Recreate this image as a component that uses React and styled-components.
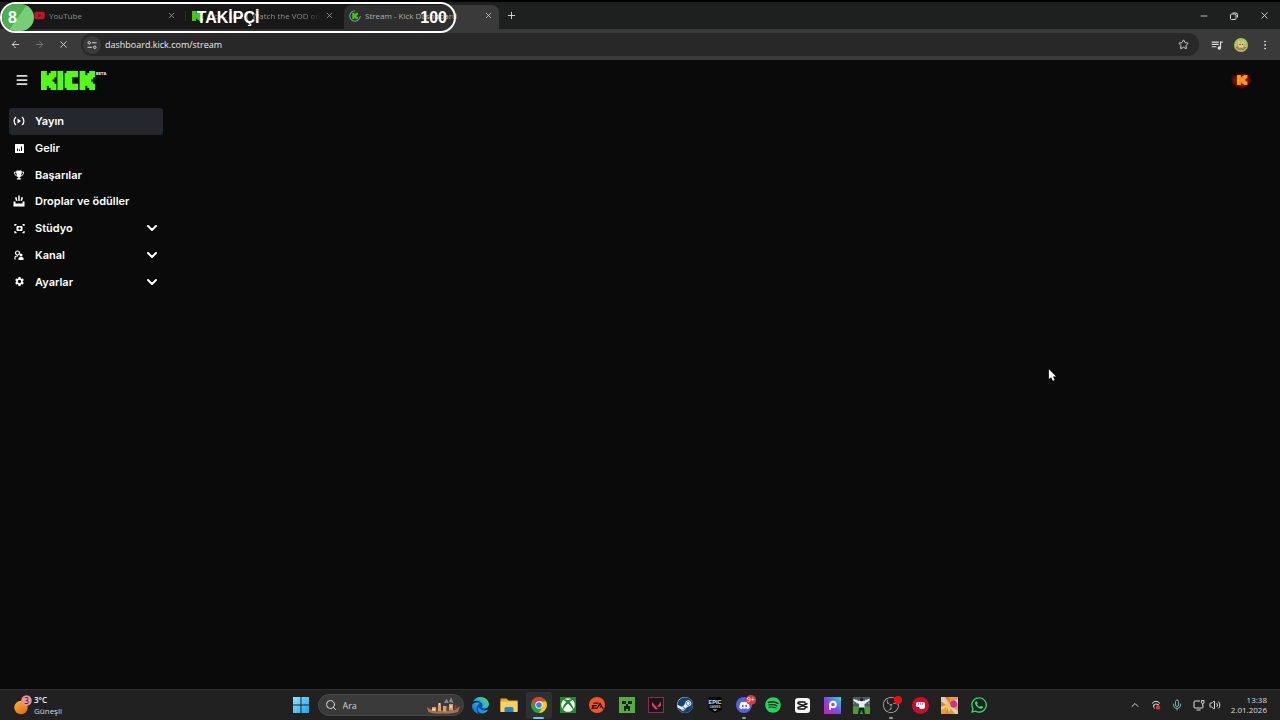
import React from 'react'
import styled, { createGlobalStyle, css } from 'styled-components'
import { ArrowLeft, ArrowRight, X, Plus, Star, Minus, EllipsisVertical, Search, ChevronDown, ChevronUp, Mic, Volume2, Menu } from 'lucide-react'
import { FaXbox, FaDiscord, FaSpotify, FaSteam, FaWhatsapp, FaEdge, FaYoutube, FaTrophy } from 'react-icons/fa6'
import { MdSettings, MdQueueMusic } from 'react-icons/md'
import { SiEa, SiValorant, SiObsstudio } from 'react-icons/si'

const KShape = ({ x = 0 }) => (
  <g transform={`translate(${x} 0)`}>
    <rect width="3" height="9" />
    <rect x="2.5" y="2" width="2" height="5" />
    <rect x="4" y="1" width="1.5" height="7" />
    <rect x="5" width="2" height="4" />
    <rect x="5" y="5" width="2" height="4" />
    <rect x="5" y="3" width="1" height="3" />
    <rect x="6" width="2" height="3" />
    <rect x="6" y="6" width="2" height="3" />
  </g>
)

const KickLogo = () => (
  <svg width="54" height="19" viewBox="0 0 28 9" preserveAspectRatio="none" fill="#53fc18" role="img" aria-label="Kick">
    <KShape />
    <rect x="8.5" width="3" height="9" />
    <rect x="12.2" y="1" width="2" height="7" />
    <rect x="13.2" width="3" height="9" />
    <rect x="15" width="4.2" height="3" />
    <rect x="15" y="6" width="4.2" height="3" />
    <KShape x={20} />
  </svg>
)

const KickMark = () => (
  <svg width="11" height="10" viewBox="0 0 8 9" preserveAspectRatio="none" fill="#53fc18">
    <KShape />
  </svg>
)

const LoadingMark = () => (
  <svg width="12" height="12" viewBox="0 0 22 22">
    <circle cx="11" cy="11" r="9.5" fill="none" stroke="#8cc4ae" strokeWidth="2" strokeDasharray="44 16" />
    <g fill="#53fc18" transform="translate(6 5) scale(1.3)">
      <KShape />
    </g>
  </svg>
)

const StreamIcon = () => (
  <svg width="12" height="10" viewBox="0 0 24 20" fill="none" stroke="#fff" strokeWidth="2.6">
    <path d="M6 2C1 6 1 14 6 18M18 2c5 4 5 12 0 16" />
    <path d="M9 5v10l7-5z" fill="#fff" stroke="none" />
  </svg>
)

const RevenueIcon = () => (
  <svg width="9" height="9" viewBox="0 0 18 18">
    <rect width="18" height="18" rx="1" fill="#fff" />
    <path d="M4 9h2v5H4zM8 11h2v3H8zM12 5h2v9h-2z" fill="#0a0a0a" />
  </svg>
)

const DropsIcon = () => (
  <svg width="12" height="12" viewBox="0 0 24 24" fill="#fff">
    <path d="M10.5 1h3v11h-3zM4 5l3-1 2 7-3 1zM20 5l-3-1-2 7 3 1zM1 13h4v4h14v-4h4v10H1z" />
  </svg>
)

const StudioIcon = () => (
  <svg width="11" height="11" viewBox="0 0 22 22" fill="none" stroke="#fff" strokeWidth="2.5">
    <path d="M2 6V3h3M17 3h3v3M2 16v3h3M17 19h3v-3" />
    <rect x="5" y="6" width="12" height="10" rx="2" fill="#fff" stroke="none" />
    <circle cx="11" cy="11" r="2.4" fill="#0a0a0a" stroke="none" />
  </svg>
)

const ChannelIcon = () => (
  <svg width="10" height="10" viewBox="0 0 20 20" fill="none" stroke="#fff" strokeWidth="2.4">
    <circle cx="7" cy="6" r="4" />
    <path d="M2 19v-4q0-3 4-3h2" />
    <circle cx="14" cy="10" r="3" fill="#fff" stroke="none" />
    <path d="M9 20v-3q0-3 3-3h4q3 0 3 3v3z" fill="#fff" stroke="none" />
  </svg>
)

const FlameAvatar = () => (
  <svg width="22" height="20" viewBox="0 0 22 20">
    <defs>
      <radialGradient id="flame">
        <stop offset="0" stopColor="#b02a08" />
        <stop offset="0.6" stopColor="#7a1008" />
        <stop offset="1" stopColor="#300806" />
      </radialGradient>
    </defs>
    <path d="M1 5l4 1 2-3 3 2 4-3 1 3 5-1-1 4 2 3-3 3-3 3-4 2-4-2-4-2-2-3-1-3z" fill="url(#flame)" />
    <g fill="#f79a18" transform="translate(6 5) scale(1.3 1.1)">
      <KShape />
    </g>
  </svg>
)

const ProfileAvatar = () => (
  <svg width="14" height="14" viewBox="0 0 28 28">
    <circle cx="14" cy="14" r="14" fill="#a9c65a" />
    <path d="M3 19q11-7 22 0a14 14 0 0 1-22 0" fill="#cf6a3c" />
    <path d="M9 3l4 7h3l3-7 1 10-2 8h-8l-2-8z" fill="#e4cf9c" />
    <circle cx="12" cy="13" r="1.5" fill="#4c3a28" />
    <circle cx="17" cy="13" r="1.5" fill="#4c3a28" />
    <rect x="11" y="19" width="6" height="5" fill="#7d8a8c" />
  </svg>
)

const SiteInfoIcon = () => (
  <svg width="10" height="10" viewBox="0 0 20 20" fill="none" stroke="#d6d6d6" strokeWidth="2">
    <circle cx="4.5" cy="5.5" r="2.5" />
    <path d="M10 5.5h9M1 14.5h9" />
    <circle cx="15.5" cy="14.5" r="2.5" />
  </svg>
)

const RestoreIcon = () => (
  <svg width="8" height="8" viewBox="0 0 16 16" fill="none" stroke="#d8d8d8" strokeWidth="2">
    <rect x="1" y="4" width="11" height="11" rx="2" />
    <path d="M5 2h7q3 0 3 3v6" />
  </svg>
)

const WeatherIcon = () => (
  <svg width="18" height="20" viewBox="0 0 36 40">
    <defs>
      <linearGradient id="sun" x1="0" y1="0" x2="0.6" y2="1">
        <stop offset="0" stopColor="#f8b636" />
        <stop offset="1" stopColor="#e27216" />
      </linearGradient>
    </defs>
    <circle cx="14" cy="25" r="13.5" fill="url(#sun)" />
    <circle cx="25" cy="11" r="10.5" fill="#ef8f9c" />
    <text x="25" y="17" textAnchor="middle" fontSize="16" fontFamily="Noto Sans, sans-serif" fill="#33191c">3</text>
  </svg>
)

const WindowsIcon = () => (
  <svg width="16" height="16" viewBox="0 0 32 32">
    <defs>
      <linearGradient id="win" x1="0" y1="0" x2="1" y2="1">
        <stop offset="0" stopColor="#8fe3fb" />
        <stop offset="1" stopColor="#1fa4ec" />
      </linearGradient>
    </defs>
    <path d="M0 0h15v15H0zM17 0h15v15H17zM0 17h15v15H0zM17 17h15v15H17z" fill="url(#win)" />
  </svg>
)

const BazaarArt = () => (
  <svg width="36" height="18" viewBox="0 0 72 36">
    <path d="M2 22q8 8 18 6l26 2q14-2 22-10l-4 12q-14 5-30 3-20 2-30-4z" fill="#a8714c" />
    <path d="M36 14l5-9 5 9zM46 12l4-10 5 12z" fill="#8b838c" />
    <path d="M12 22h8v8h-8zM24 18h6v12h-6zM34 20h7v11h-7zM46 16h8v13h-8z" fill="#d9a063" />
    <path d="M20 24h4v7h-4zM41 22h5v8h-5zM56 18h5v10h-5z" fill="#6b4350" />
    <path d="M25 14h4v4h-4zM48 19h4v4h-4zM13 25h5v4h-5z" fill="#f3dfbb" />
  </svg>
)

const EdgeIcon = () => (
  <svg width="17" height="17" viewBox="0 0 512 512">
    <defs>
      <linearGradient id="edge" x1="0" y1="1" x2="1" y2="0">
        <stop offset="0" stopColor="#1268c9" />
        <stop offset="0.5" stopColor="#25a7df" />
        <stop offset="1" stopColor="#5ddb62" />
      </linearGradient>
    </defs>
    <circle cx="220" cy="300" r="180" fill="#0f4f9f" />
    <FaEdge size={512} fill="url(#edge)" />
  </svg>
)

const FolderIcon = () => (
  <svg width="18" height="16" viewBox="0 0 36 32">
    <path d="M1 3h12l4 4h18v22H1z" fill="#e7a92a" />
    <path d="M1 9h34v21H1z" fill="#fbd35a" />
    <path d="M9 30v-7q0-3 3-3h12q3 0 3 3v7z" fill="#2384cf" />
  </svg>
)

const ChromeIcon = () => (
  <svg width="16" height="16" viewBox="0 0 48 48">
    <circle cx="24" cy="24" r="24" fill="#2ba14b" />
    <path d="M24 13h20.8A24 24 0 0 1 24 48l10-18z" fill="#fbc41c" />
    <path d="M3.2 12A24 24 0 0 1 44.8 13H24L14 30z" fill="#e3402f" />
    <circle cx="24" cy="24" r="11" fill="#fff" />
    <circle cx="24" cy="24" r="8.5" fill="#3b7fe8" />
  </svg>
)

const CreeperIcon = () => (
  <svg width="16" height="16" viewBox="0 0 16 16">
    <rect width="16" height="16" fill="#57ad3d" />
    <path d="M3 4h4v3H3zM9 4h4v3H9zM7 7h2v2h2v5H9v-2H7v2H5V9h2z" fill="#10200d" />
  </svg>
)

const EpicIcon = () => (
  <svg width="14" height="16" viewBox="0 0 28 32">
    <path d="M1 2q0-2 2-2h22q2 0 2 2v24l-13 6-13-6z" fill="#070707" />
    <text x="14" y="14" textAnchor="middle" fontSize="11" fontWeight="700" fontFamily="Liberation Sans, sans-serif" fill="#e6e6e6">EPIC</text>
    <text x="14" y="21" textAnchor="middle" fontSize="6" fontWeight="700" fontFamily="Liberation Sans, sans-serif" fill="#bdbdbd">GAMES</text>
    <path d="M9 25h10l-5 3z" fill="#ddd" />
  </svg>
)

const CapcutIcon = () => (
  <svg width="15" height="15" viewBox="0 0 30 30">
    <rect width="30" height="30" rx="6" fill="#f5f5f5" />
    <path d="M20 11V9q0-1-2-1H8q-2 0-2 2v1l19 8M25 11L6 19v1q0 2 2 2h10q2 0 2-1v-2" fill="none" stroke="#111" strokeWidth="2.8" />
  </svg>
)

const PicsartIcon = () => (
  <svg width="17" height="17" viewBox="0 0 34 34">
    <defs>
      <linearGradient id="pics" x1="0" y1="1" x2="1" y2="0">
        <stop offset="0" stopColor="#d01cc4" />
        <stop offset="0.5" stopColor="#7a4be0" />
        <stop offset="1" stopColor="#2ce0dc" />
      </linearGradient>
    </defs>
    <rect width="34" height="34" fill="url(#pics)" />
    <circle cx="18" cy="15" r="5.5" fill="none" stroke="#fff" strokeWidth="4" />
    <rect x="10" y="13" width="4" height="13" rx="2" fill="#fff" />
  </svg>
)

const FootballIcon = () => (
  <svg width="17" height="17" viewBox="0 0 34 34">
    <rect width="34" height="34" fill="#4d5a63" />
    <rect y="19" width="34" height="15" fill="#4f9d30" />
    <path d="M0 6h34M0 12h34" stroke="#9aa7ad" strokeWidth="2" strokeDasharray="3 3" />
    <path d="M1 4l11 4h10l11-5v4l-10 7v8H12v-8L1 8z" fill="#e9eef2" />
    <circle cx="17" cy="5" r="3.5" fill="#2a2220" />
    <path d="M12 21h10l2 13h-4l-3-8-3 8h-4z" fill="#17242c" />
  </svg>
)

const FistIcon = () => (
  <svg width="17" height="17" viewBox="0 0 34 34">
    <circle cx="17" cy="17" r="17" fill="#cf0b2c" />
    <path d="M8 14q0-4 4-4h10q4 0 4 4v5q0 5-5 5h-5l-2-4h-3q-3 0-3-3z" fill="#fff" />
    <path d="M13 11v5M17 11v5M21 11v5" stroke="#cf0b2c" strokeWidth="1" />
  </svg>
)

const BurstIcon = () => (
  <svg width="17" height="17" viewBox="0 0 34 34">
    <rect width="34" height="34" fill="#e9a02a" />
    <path d="M0 0h8l8 14L34 4v8l-14 6 14 10v6h-6l-9-12-4 12H8l4-14L0 26v-6l10-4L0 8z" fill="#d8cfc0" />
    <path d="M8 0h8l3 12zM0 10l10 6-10 2zM8 34l5-13 3 13z" fill="#f07b1c" />
    <circle cx="25" cy="14" r="7" fill="#d12a9b" />
    <circle cx="14" cy="17" r="5" fill="#f8c62e" />
  </svg>
)

const HeadsetIcon = () => (
  <svg width="10" height="10" viewBox="0 0 20 20" fill="none" stroke="#dcdcdc" strokeWidth="2">
    <path d="M2 7q8-9 16 0M4 11q6-6 12-1M8 17q-5-2-2-7" />
    <circle cx="14" cy="15" r="4.5" fill="#e5322f" stroke="none" />
  </svg>
)

const NetworkIcon = () => (
  <svg width="12" height="12" viewBox="0 0 24 24" fill="none" stroke="#dcdcdc" strokeWidth="2">
    <path d="M14 4H4q-2 0-2 2v10q0 2 2 2h14q2 0 2-2v-3M7 22h8" />
    <path d="M17 3h5v5q-2.5 3-5 0zM19.5 10v4" />
  </svg>
)

const CursorIcon = () => (
  <svg width="8" height="13" viewBox="0 0 9 14">
    <path d="M1 0v11l2.5-2 2 4 2-1-2-4H9z" fill="#fff" />
  </svg>
)

const NAV = [
  { label: 'Yayın', icon: <StreamIcon />, active: true },
  { label: 'Gelir', icon: <RevenueIcon /> },
  { label: 'Başarılar', icon: <FaTrophy size={10} /> },
  { label: 'Droplar ve ödüller', icon: <DropsIcon /> },
  { label: 'Stüdyo', icon: <StudioIcon />, more: true },
  { label: 'Kanal', icon: <ChannelIcon />, more: true },
  { label: 'Ayarlar', icon: <MdSettings size={11} />, more: true },
]

const APPS = [
  { name: 'Edge', icon: <EdgeIcon /> },
  { name: 'Dosya Gezgini', icon: <FolderIcon /> },
  { name: 'Chrome', icon: <ChromeIcon />, active: true, line: 'wide' },
  { name: 'Xbox', icon: <FaXbox size={14} />, tile: '#1f8a2c' },
  { name: 'EA', icon: <SiEa size={13} color="#2a0d08" />, tile: '#f0562a', round: true },
  { name: 'Minecraft', icon: <CreeperIcon /> },
  { name: 'Valorant', icon: <SiValorant size={9} color="#e0405a" />, tile: '#1b161b', outline: true },
  { name: 'Steam', icon: <FaSteam size={17} color="#15406f" />, tile: '#e4edf4', round: true },
  { name: 'Epic Games', icon: <EpicIcon /> },
  { name: 'Discord', icon: <FaDiscord size={11} />, tile: '#5560e6', round: true, badge: '9+', line: 'small' },
  { name: 'Spotify', icon: <FaSpotify size={16} color="#22d760" /> },
  { name: 'CapCut', icon: <CapcutIcon /> },
  { name: 'Picsart', icon: <PicsartIcon /> },
  { name: 'Football', icon: <FootballIcon /> },
  { name: 'OBS', icon: <SiObsstudio size={16} color="#b9b9b9" />, dot: true, line: 'small' },
  { name: 'Fist', icon: <FistIcon /> },
  { name: 'Burst', icon: <BurstIcon /> },
  { name: 'WhatsApp', icon: <FaWhatsapp size={18} color="#2fdc6c" /> },
]

const App = () => {
  return (
    <Screen>
      <GlobalStyle />
      <TabStrip>
        <Tab>
          <FaYoutube size={11} color="#ff1433" />
          <TabTitle>YouTube</TabTitle>
          <TabClose aria-label="YouTube kapat"><X size={9} /></TabClose>
        </Tab>
        <Tab $divided>
          <KickMark />
          <TabTitle $fade>Kick - Live | Watch the VOD on</TabTitle>
          <TabClose aria-label="Kick kapat"><X size={9} /></TabClose>
        </Tab>
        <Tab $active>
          <LoadingMark />
          <TabTitle>Stream - Kick Dashboard</TabTitle>
          <TabClose aria-label="Stream kapat"><X size={9} /></TabClose>
        </Tab>
        <IconButton aria-label="Yeni sekme"><Plus size={11} /></IconButton>
        <WindowButtons>
          <IconButton aria-label="Küçült"><Minus size={10} /></IconButton>
          <IconButton aria-label="Geri yükle"><RestoreIcon /></IconButton>
          <IconButton aria-label="Kapat"><X size={11} /></IconButton>
        </WindowButtons>
      </TabStrip>

      <Toolbar>
        <IconButton aria-label="Geri"><ArrowLeft size={11} /></IconButton>
        <IconButton aria-label="İleri" $muted><ArrowRight size={11} /></IconButton>
        <IconButton aria-label="Durdur"><X size={11} /></IconButton>
        <AddressBar>
          <SiteInfo aria-label="Site bilgisi"><SiteInfoIcon /></SiteInfo>
          <AddressInput aria-label="Adres" defaultValue="dashboard.kick.com/stream" />
          <IconButton aria-label="Yer işareti"><Star size={11} /></IconButton>
        </AddressBar>
        <ToolbarEnd>
          <IconButton aria-label="Medya"><MdQueueMusic size={14} /></IconButton>
          <IconButton aria-label="Profil"><ProfileAvatar /></IconButton>
          <IconButton aria-label="Menü"><EllipsisVertical size={12} /></IconButton>
        </ToolbarEnd>
      </Toolbar>

      <Header>
        <IconButton aria-label="Kenar çubuğu"><Menu size={14} strokeWidth={3} /></IconButton>
        <Brand href="#">
          <KickLogo />
          <Beta>BETA</Beta>
        </Brand>
        <AccountButton aria-label="Hesap"><FlameAvatar /></AccountButton>
      </Header>

      <Main>
        <Sidebar>
          {NAV.map((item) => (
            <NavItem key={item.label} href="#" $active={item.active}>
              <NavIcon>{item.icon}</NavIcon>
              <NavLabel>{item.label}</NavLabel>
              {item.more && <ChevronDown size={16} strokeWidth={3} />}
            </NavItem>
          ))}
        </Sidebar>
      </Main>

      <Taskbar>
        <Weather>
          <WeatherIcon />
          <WeatherText>
            <strong>3°C</strong>
            <span>Güneşli</span>
          </WeatherText>
        </Weather>
        <Center>
          <AppButton aria-label="Başlat"><WindowsIcon /></AppButton>
          <SearchBox>
            <Search size={12} />
            <SearchInput aria-label="Ara" placeholder="Ara" />
            <BazaarArt />
          </SearchBox>
          <AppList>
            {APPS.map((app) => (
              <AppButton key={app.name} aria-label={app.name} $active={app.active}>
                {app.tile ? (
                  <Tile $color={app.tile} $round={app.round} $outline={app.outline}>{app.icon}</Tile>
                ) : (
                  app.icon
                )}
                {app.badge && <Badge>{app.badge}</Badge>}
                {app.dot && <Dot />}
                {app.line && <Line $wide={app.line === 'wide'} />}
              </AppButton>
            ))}
          </AppList>
        </Center>
        <Tray>
          <ChevronUp size={12} />
          <HeadsetIcon />
          <Mic size={12} color="#74b5ab" />
          <TrayPair>
            <NetworkIcon />
            <Volume2 size={12} />
          </TrayPair>
          <Clock>
            <span>13:38</span>
            <span>2.01.2026</span>
          </Clock>
        </Tray>
      </Taskbar>

      <FollowerGoal>
        <GoalCount>8</GoalCount>
        <GoalTitle>TAKİPÇİ</GoalTitle>
        <GoalTarget>100</GoalTarget>
      </FollowerGoal>
      <Cursor><CursorIcon /></Cursor>
    </Screen>
  )
}

export default App

const GlobalStyle = createGlobalStyle`
  * {
    box-sizing: border-box;
  }
  body {
    margin: 0;
    background: #0a0a0a;
  }
  button, input {
    font: inherit;
    color: inherit;
    border: 0;
    padding: 0;
    background: none;
    outline: none;
  }
  a {
    color: inherit;
    text-decoration: none;
  }
  svg {
    display: block;
    flex-shrink: 0;
  }
`

const Screen = styled.div`
  position: relative;
  display: flex;
  flex-direction: column;
  min-height: 100vh;
  overflow: hidden;
  color: #dcdcdc;
  background: #0a0a0a;
  font-family: 'Open Sans', 'Noto Sans', sans-serif;
  font-size: 9px;
`

const IconButton = styled.button`
  display: flex;
  align-items: center;
  justify-content: center;
  width: 24px;
  height: 24px;
  color: ${(props) => (props.$muted ? '#7a7a7a' : '#dcdcdc')};
`

const TabStrip = styled.div`
  display: flex;
  align-items: center;
  height: 29px;
  padding-left: 27px;
  border-top: 2px solid #000;
  background: #1e1f1f;
`

const Tab = styled.div`
  display: flex;
  align-items: center;
  align-self: flex-end;
  gap: 4px;
  width: 158px;
  height: 24px;
  padding: 0 9px 3px 7px;
  color: #b0b0b0;

  ${(props) =>
    props.$divided &&
    css`
      background: linear-gradient(#3c3c3c, #3c3c3c) 0 6px / 1px 10px no-repeat;
    `}

  ${(props) =>
    props.$active &&
    css`
      width: 155px;
      margin-left: 1px;
      padding: 0 6px 3px 5px;
      border-radius: 7px 7px 0 0;
      color: #d8d8d8;
      background: #3a3a3a;
    `}
`

const TabTitle = styled.span`
  flex: 1;
  min-width: 0;
  overflow: hidden;
  white-space: nowrap;
  font-size: 8px;
  line-height: 14px;
  ${(props) => props.$fade && 'mask-image: linear-gradient(90deg, #000 85%, transparent);'}
`

const TabClose = styled.button`
  color: #d4d4d4;
`

const WindowButtons = styled.div`
  display: flex;
  gap: 6px;
  margin-left: auto;
  padding-right: 4px;
`

const Toolbar = styled.div`
  display: flex;
  align-items: center;
  height: 31px;
  padding: 0 3px;
  background: #3a3a3a;
`

const AddressBar = styled.div`
  display: flex;
  flex: 1;
  align-items: center;
  height: 23px;
  margin-left: 6px;
  padding: 0 4px 0 2px;
  border-radius: 12px;
  background: #282828;
`

const SiteInfo = styled.button`
  display: flex;
  align-items: center;
  justify-content: center;
  width: 18px;
  height: 18px;
  border-radius: 50%;
  background: #3a3a3a;
`

const AddressInput = styled.input`
  flex: 1;
  min-width: 0;
  margin-left: 4px;
  color: #ececec;
  font-size: 9px;
`

const ToolbarEnd = styled.div`
  display: flex;
  margin-left: 6px;
`

const Header = styled.header`
  display: flex;
  align-items: center;
  height: 40px;
  padding: 0 27px 0 10px;
`

const Brand = styled.a`
  display: flex;
  align-items: flex-start;
  margin-left: 7px;
`

const Beta = styled.span`
  margin-left: 1px;
  color: #fff;
  font: 700 4px/5px Inter, sans-serif;
`

const AccountButton = styled.button`
  margin-left: auto;
`

const Main = styled.main`
  flex: 1;
  padding: 8px 9px;
`

const Sidebar = styled.nav`
  display: grid;
  grid-template-rows: repeat(7, 1fr);
  width: 154px;
  height: 187px;
  color: #fff;
`

const NavItem = styled.a`
  display: flex;
  align-items: center;
  padding: 0 3px 0 4px;
  border-radius: 3px;
  background: ${(props) => (props.$active ? '#24272b' : 'none')};
`

const NavIcon = styled.span`
  display: flex;
  justify-content: center;
  width: 12px;
`

const NavLabel = styled.span`
  flex: 1;
  margin-left: 10px;
  font: 600 11px/16px Inter, sans-serif;
`

const Taskbar = styled.footer`
  display: grid;
  grid-template-columns: 1fr auto 1fr;
  align-items: center;
  height: 31px;
  border-top: 1px solid #303030;
  background: #212121;
`

const Weather = styled.div`
  display: flex;
  align-items: center;
  gap: 2px;
  padding-left: 14px;
`

const WeatherText = styled.div`
  display: flex;
  flex-direction: column;
  font-size: 8px;
  line-height: 11px;

  strong {
    color: #f0f0f0;
    font-weight: 600;
  }
`

const Center = styled.div`
  display: flex;
  align-items: center;
`

const AppList = styled.div`
  display: grid;
  grid-template-columns: repeat(18, 1fr);
  width: 528px;
`

const AppButton = styled.button`
  position: relative;
  display: flex;
  align-items: center;
  justify-content: center;
  min-width: 25px;
  height: 27px;
  margin: 0 2px;
  border-radius: 3px;
  background: ${(props) => (props.$active ? '#303030' : 'none')};
`

const SearchBox = styled.label`
  display: flex;
  align-items: center;
  width: 146px;
  height: 22px;
  margin: 0 2px;
  padding: 0 1px 0 6px;
  border: 1px solid #484848;
  border-radius: 11px;
  background: #3a3a3a;
`

const SearchInput = styled.input`
  flex: 1;
  min-width: 0;
  margin-left: 6px;
  font-size: 9px;

  &::placeholder {
    color: #d2d2d2;
    opacity: 1;
  }
`

const Tile = styled.span`
  display: flex;
  align-items: center;
  justify-content: center;
  width: 16px;
  height: 16px;
  overflow: hidden;
  color: #fff;
  border: ${(props) => (props.$outline ? '1px solid #86304a' : '0')};
  border-radius: ${(props) => (props.$round ? '50%' : '0')};
  background: ${(props) => props.$color};
`

const Badge = styled.span`
  position: absolute;
  top: 3px;
  right: 1px;
  width: 10px;
  height: 10px;
  border-radius: 50%;
  color: #fff;
  font-size: 7px;
  line-height: 10px;
  text-align: center;
  background: #d0404c;
`

const Dot = styled.span`
  position: absolute;
  top: 4px;
  right: 2px;
  width: 8px;
  height: 8px;
  border-radius: 50%;
  background: #f00c10;
`

const Line = styled.span`
  position: absolute;
  bottom: 0;
  width: ${(props) => (props.$wide ? '11px' : '4px')};
  height: 2px;
  border-radius: 1px;
  background: ${(props) => (props.$wide ? '#62c6f2' : '#9a9a9a')};
`

const Tray = styled.div`
  display: flex;
  align-items: center;
  justify-content: flex-end;
  gap: 10px;
  padding-right: 13px;
`

const TrayPair = styled.div`
  display: flex;
  gap: 4px;
`

const Clock = styled.div`
  display: flex;
  flex-direction: column;
  align-items: flex-end;
  font-size: 8px;
  line-height: 10px;
`

const FollowerGoal = styled.div`
  position: absolute;
  top: 2px;
  left: 0;
  display: grid;
  grid-template-columns: 1fr auto 1fr;
  align-items: center;
  width: 456px;
  height: 31px;
  border: 2px solid #fff;
  border-radius: 16px;
  overflow: hidden;
  color: #fff;
  background: rgba(0, 0, 0, 0.2);
  font: 700 16px/20px 'Liberation Sans', sans-serif;
`

const GoalCount = styled.span`
  display: flex;
  align-items: center;
  width: 32px;
  height: 27px;
  padding-left: 6px;
  border-radius: 0 14px 14px 0;
  background: linear-gradient(125deg, #4fb052 50%, #76cf78 50%);
`

const GoalTitle = styled.span``

const GoalTarget = styled.span`
  padding-right: 7px;
  text-align: right;
`

const Cursor = styled.div`
  position: absolute;
  top: 369px;
  left: 1048px;
`
